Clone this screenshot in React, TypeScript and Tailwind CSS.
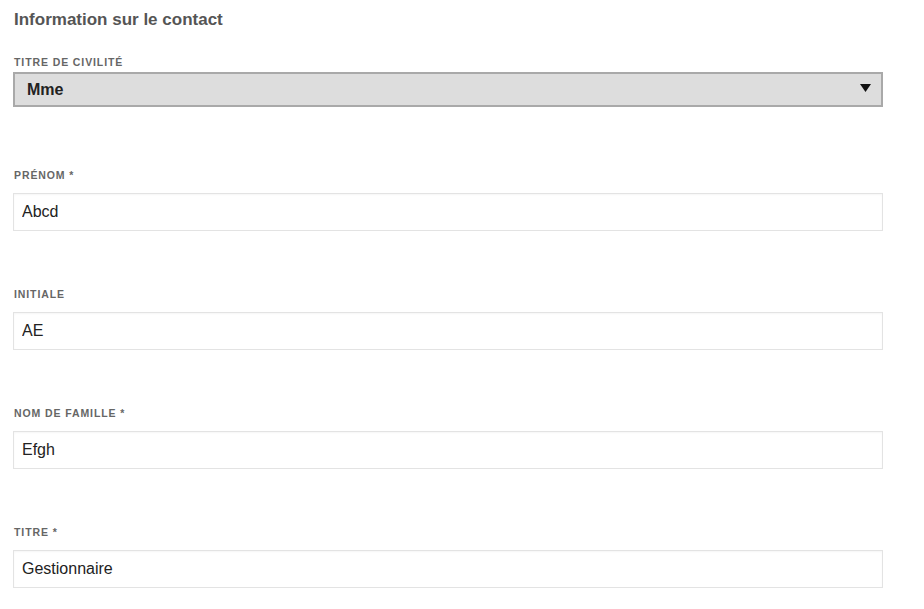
import React from 'react';

type TField = {
  label: string;
  value: string;
  required?: boolean;
};

const fields: TField[] = [
  { label: 'Prénom', value: 'Abcd', required: true },
  { label: 'Initiale', value: 'AE' },
  { label: 'Nom de famille', value: 'Efgh', required: true },
  { label: 'Titre', value: 'Gestionnaire', required: true },
];

const labelClass =
  'block pl-[1px] text-[10.5px] leading-[12px] font-bold uppercase tracking-[0.9px] text-[#666]';

export default function App() {
  return (
    <div
      className="min-h-screen bg-white pt-[10px] pl-[13px]"
      style={{ fontFamily: '"Liberation Sans", Arial, sans-serif' }}
    >
      <div className="w-[870px]">
        <h2 className="pl-[1px] text-[17px] leading-[20px] font-bold text-[#555]">
          Information sur le contact
        </h2>

        <div className="mt-[26px]">
          <label className={labelClass}>Titre de civilité</label>
          <div className="mt-[4px] flex h-[35px] items-center justify-between border-2 border-[#a9a9a9] bg-[#dddddd] pl-[12px] pr-[10px]">
            <span className="text-[16px] font-bold text-[#222]">Mme</span>
            <svg width="11" height="8" viewBox="0 0 11 8" className="-mt-[3px]">
              <polygon points="0,0 11,0 5.5,8" fill="#111" />
            </svg>
          </div>
        </div>

        {fields.map((field, i) => (
          <div key={field.label} className={i === 0 ? 'mt-[62px]' : 'mt-[57px]'}>
            <label className={labelClass}>
              {field.label}
              {field.required && ' *'}
            </label>
            <input
              type="text"
              defaultValue={field.value}
              className="mt-[12px] block h-[38px] w-full border border-[#e3e3e3] bg-white px-[8px] text-[16px] text-[#222] shadow-[inset_0_1px_2px_rgba(0,0,0,0.04)] outline-none"
            />
          </div>
        ))}
      </div>
    </div>
  );
}
